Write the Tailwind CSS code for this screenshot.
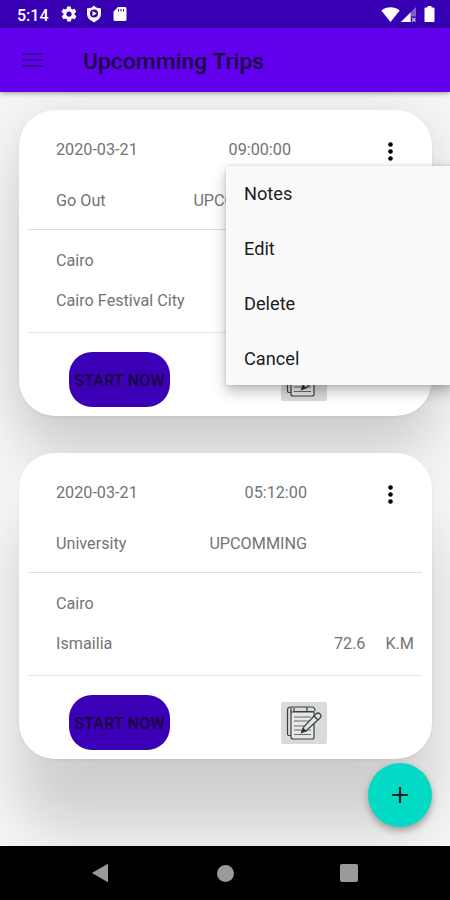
<!DOCTYPE html>
<html lang="en">
<head>
    <meta charset="UTF-8">
    <meta name="viewport" content="width=device-width, initial-scale=1.0">
    <title>Upcomming Trips</title>
    <script src="https://cdn.jsdelivr.net/npm/@tailwindcss/browser@4"></script>
</head>
<body class="bg-[#f6f6f6] font-['Roboto','Liberation_Sans',sans-serif]">

    <div class="relative w-[450px] h-[900px] overflow-hidden flex flex-col">

        <!-- Status bar -->
        <div class="relative z-10 h-7 shrink-0 bg-[#3700b3] flex items-center pl-[17px] pr-[15px] text-white">
            <span class="w-[43px] pt-[3px] text-base font-medium">5:14</span>
            <svg class="w-[18px] h-[18px]" viewBox="0 0 24 24" fill="currentColor"><path d="M19.4 13c0-.3.1-.6.1-1s0-.7-.1-1l2.1-1.600c.2-.2.200-.400.100-.700l-2-3.400c-.1-.2-.4-.3-.6-.2l-2.500 1c-.5-.4-1.100-.700-1.700-1l-.400-2.600c0-.3-.200-.500-.500-.500h-4c-.2 0-.5.200-.500.400l-.400 2.700c-.6.200-1.100.600-1.700 1l-2.500-1c-.2-.1-.5 0-.6.200l-2 3.400c-.1.200-.1.500.1.700L4.600 11c0 .3-.1.600-.1 1s0 .7.100 1l-2.100 1.600c-.2.200-.2.400-.1.700l2 3.400c.1.200.4.300.6.200l2.500-1c.5.400 1.100.700 1.700 1l.400 2.600c0 .3.200.500.500.500h4c.2 0 .5-.2.500-.4l.400-2.700c.6-.2 1.100-.600 1.700-1l2.500 1c.2.1.5 0 .600-.2l2-3.400c.1-.2.1-.5-.1-.7zM12 15.500a3.500 3.500 0 1 1 0-7 3.500 3.500 0 0 1 0 7z"/></svg>
            <svg class="ml-[7px] w-[18px] h-[18px]" viewBox="0 0 18 18"><path fill="#fff" d="M9 .5 11 2.500 16 3.500v5c0 4-2.500 6.500-5 7.500l-2 1.500L7 16c-2.500-1-5-3.500-5-7.500v-5l5-1z"/><circle cx="9" cy="8.500" r="4" fill="#3700b3"/><path fill="#fff" d="m7.500 6 4.200 2.500-4.200 2.500z"/></svg>
            <svg class="ml-2 w-[18px] h-[18px]" viewBox="0 0 18 18"><path fill="#fff" d="M7 2h7a1.500 1.500 0 0 1 1.500 1.500v11A1.500 1.500 0 0 1 14 16H4a1.500 1.500 0 0 1-1.500-1.500V6.500z"/><path stroke="#3700b3" stroke-width="1" d="M7.500 4v2.500M10 4v2.500M12.500 4v2.500"/></svg>
            <svg class="ml-auto w-[19px] h-[15px]" viewBox="0 0 19 15"><path fill="#fff" d="M.3 3.500C5.500-.7 13.500-.7 18.700 3.500L9.500 15z"/></svg>
            <svg class="ml-px w-4 h-[15px]" viewBox="0 0 16 15"><path fill="#8060cf" d="M15 0v15H0z"/><path fill="#fff" d="M9.500 5.500V15H0z"/><path fill="#3700b3" d="M10 9.500h6V15h-6z"/><path stroke="#cdbfec" stroke-width="1.300" d="m11 11 3.500 3.500M14.500 11 11 14.500"/></svg>
            <svg class="ml-[7px] w-[11px] h-4" viewBox="0 0 11 16"><path fill="#fff" d="M3.500 0h4v1.600H9.500a1 1 0 0 1 1 1V15a1 1 0 0 1-1 1h-8a1 1 0 0 1-1-1V2.600a1 1 0 0 1 1-1h2z"/></svg>
        </div>

        <!-- Toolbar -->
        <header class="relative z-10 h-16 shrink-0 bg-[#6200ee] flex items-center pl-[22px] shadow-[0_1px_5px_rgba(0,0,0,0.4)]">
            <svg class="w-[21px] h-4 -mt-px" viewBox="0 0 21 16" stroke="#3d0598" stroke-width="2.200"><path d="M0 2h21M0 8h21M0 14h21"/></svg>
            <h1 class="ml-10 mt-[5px] text-[22.900px] font-medium text-[#19043d] whitespace-nowrap">Upcomming Trips</h1>
        </header>

        <!-- Trip list -->
        <main class="flex-1 flex flex-col gap-[37px] pl-[19px] pr-[18px] pt-[18px] text-[16.200px]/[24px] text-[#747474]">

            <section class="relative h-[306px] shrink-0 rounded-[36px] bg-white pt-7 shadow-[0_1px_3px_rgba(0,0,0,0.06),0_8px_50px_rgba(0,0,0,0.13),0_64px_60px_rgba(0,0,0,0.09)]">
                <div class="flex items-center h-6 pl-[37px] pr-[39px]">
                    <div class="w-[235px] flex justify-between"><span>2020-03-21</span><span>09:00:00</span></div>
                    <svg class="ml-auto mt-[3px] w-[5px] h-[19px]" viewBox="0 0 5 19"><circle cx="2.500" cy="2.500" r="2.300"/><circle cx="2.500" cy="9.500" r="2.300"/><circle cx="2.500" cy="16.500" r="2.300"/></svg>
                </div>
                <div class="mt-[27px] h-6 ml-[37px] w-[235px] flex justify-between"><span>Go Out</span><span>UPCOMMING</span></div>
                <div class="mt-4 ml-[9px] mr-[10px] h-px bg-[#dedede]"></div>
                <p class="mt-[19px] ml-[37px] h-6">Cairo</p>
                <p class="mt-4 ml-[37px] h-6">Cairo Festival City</p>
                <div class="mt-[19px] ml-[9px] mr-[10px] h-px bg-[#e4e4e4]"></div>
                <div class="mt-[19px] pl-[50px] flex">
                    <button class="w-[101px] h-[55px] pt-[2px] rounded-[23px] bg-[#3b00b6] text-base font-medium text-[#19043d] whitespace-nowrap tracking-[0.2px]">START NOW</button>
                    <div class="mt-[7px] ml-[111px] w-[46px] h-[42px] rounded-xs bg-[#d9dbdb]">
                        <svg class="w-[46px] h-[42px]" viewBox="0 0 46 42" fill="none" stroke="#3c3f40" stroke-width="1.200"><path d="M10 33.500H8q-1.500 0-1.500-1.500V8q0-3 3-3H31q3 0 3 4"/><path fill="#e6e8e8" d="M10 10h23v25q0 2-2 2H12q-2 0-2-2z"/><path d="M10 10V5.500M13 10V6M26 5v4M33 9.500H13"/><path stroke="#686b6b" d="M13 15h17M13 19h15M13 24h11M13 28h17M13 32.500h17"/><path fill="#e1e3e3" d="m21 30 2-5.500L35 12q2-2 4 0t0 4L26 28z"/><path d="m33 14 4 4"/><path fill="#151515" d="m20.500 30.500 1.500-4 3 2.500z"/></svg>
                    </div>
                </div>
            </section>

            <section class="relative h-[306px] shrink-0 rounded-[36px] bg-white pt-7 shadow-[0_1px_3px_rgba(0,0,0,0.06),0_56px_60px_rgba(0,0,0,0.1),0_84px_60px_rgba(0,0,0,0.07)]">
                <div class="flex items-center h-6 pl-[37px] pr-[39px]">
                    <div class="w-[251px] flex justify-between"><span>2020-03-21</span><span>05:12:00</span></div>
                    <svg class="ml-auto mt-[3px] w-[5px] h-[19px]" viewBox="0 0 5 19"><circle cx="2.500" cy="2.500" r="2.300"/><circle cx="2.500" cy="9.500" r="2.300"/><circle cx="2.500" cy="16.500" r="2.300"/></svg>
                </div>
                <div class="mt-[27px] h-6 ml-[37px] w-[251px] flex justify-between"><span>University</span><span>UPCOMMING</span></div>
                <div class="mt-4 ml-[9px] mr-[10px] h-px bg-[#dedede]"></div>
                <p class="mt-[19px] ml-[37px] h-6">Cairo</p>
                <div class="mt-4 pl-[37px] pr-[18px] h-6 flex"><span>Ismailia</span><span class="ml-auto">72.6</span><span class="ml-5">K.M</span></div>
                <div class="mt-[19px] ml-[9px] mr-[10px] h-px bg-[#e4e4e4]"></div>
                <div class="mt-[19px] pl-[50px] flex">
                    <button class="w-[101px] h-[55px] pt-[2px] rounded-[23px] bg-[#3b00b6] text-base font-medium text-[#19043d] whitespace-nowrap tracking-[0.2px]">START NOW</button>
                    <div class="mt-[7px] ml-[111px] w-[46px] h-[42px] rounded-xs bg-[#d9dbdb]">
                        <svg class="w-[46px] h-[42px]" viewBox="0 0 46 42" fill="none" stroke="#3c3f40" stroke-width="1.200"><path d="M10 33.500H8q-1.500 0-1.500-1.500V8q0-3 3-3H31q3 0 3 4"/><path fill="#e6e8e8" d="M10 10h23v25q0 2-2 2H12q-2 0-2-2z"/><path d="M10 10V5.500M13 10V6M26 5v4M33 9.500H13"/><path stroke="#686b6b" d="M13 15h17M13 19h15M13 24h11M13 28h17M13 32.500h17"/><path fill="#e1e3e3" d="m21 30 2-5.500L35 12q2-2 4 0t0 4L26 28z"/><path d="m33 14 4 4"/><path fill="#151515" d="m20.500 30.500 1.500-4 3 2.500z"/></svg>
                    </div>
                </div>
            </section>
        </main>

        <!-- Popup menu of the first trip -->
        <ul class="absolute z-20 left-[226px] top-[166px] w-[228px] h-[219px] rounded-xs bg-[#fafafa] text-[18.200px] text-[#1c1c1c] shadow-[0_6px_14px_rgba(0,0,0,0.28),0_0_3px_rgba(0,0,0,0.15)]">
            <li class="h-[55px] flex items-center pl-[18px]">Notes</li>
            <li class="h-[55px] flex items-center pl-[18px]">Edit</li>
            <li class="h-[55px] flex items-center pl-[18px]">Delete</li>
            <li class="h-[55px] flex items-center pl-[18px]">Cancel</li>
        </ul>

        <!-- Add trip button -->
        <button class="absolute z-20 left-[368px] top-[763px] w-16 h-16 rounded-full bg-[#03dac5] flex items-center justify-center shadow-[0_4px_7px_rgba(0,0,0,0.3)]">
            <svg class="w-4 h-4" viewBox="0 0 16 16" stroke="#06221f" stroke-width="2.200"><path d="M8 0v16M0 8h16"/></svg>
        </button>

        <!-- Navigation bar -->
        <nav class="relative z-10 h-[54px] shrink-0 bg-black flex items-center pl-[91px] text-[#9a9a9a]">
            <svg class="w-[18px] h-5" viewBox="0 0 18 20" fill="currentColor"><path d="M17 .8v18.400L.8 10z"/></svg>
            <div class="ml-[108px] w-[17px] h-[17px] rounded-full bg-[#9a9a9a]"></div>
            <div class="ml-[106px] w-[18px] h-[18px] rounded-xs bg-[#9a9a9a]"></div>
        </nav>
    </div>

</body>
</html>
